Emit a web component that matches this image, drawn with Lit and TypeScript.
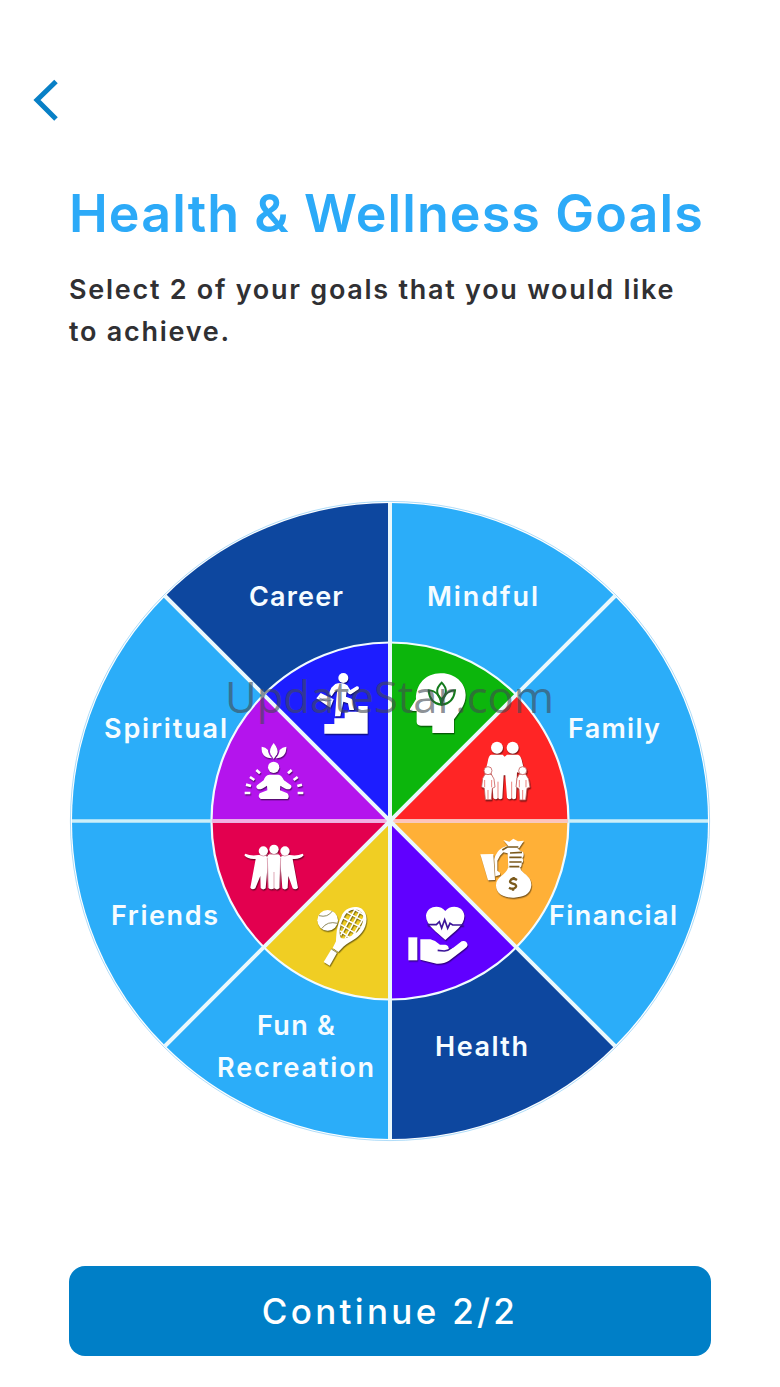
/**
 * Health & Wellness goal picker
 */
import { LitElement, html, svg, css, SVGTemplateResult } from 'lit'
import { customElement, state } from 'lit/decorators.js'
import { classMap } from 'lit/directives/class-map.js'

interface LabelLine {
  text: string
  x: number
  y: number
  width: number
}

interface Goal {
  id: string
  start: number
  color: string
  icon: SVGTemplateResult
  iconX: number
  iconY: number
  lines: LabelLine[]
}

const OUTER = 318
const INNER = 178.5

// Point on a circle, 0deg at twelve o'clock, clockwise
const point = (r: number, deg: number) => {
  const a = (deg * Math.PI) / 180
  return `${(r * Math.sin(a)).toFixed(2)} ${(-r * Math.cos(a)).toFixed(2)}`
}

const wedge = (r: number, start: number) =>
  `M0 0L${point(r, start)}A${r} ${r} 0 0 1 ${point(r, start + 45)}Z`

// Icons are drawn at three units per pixel
const careerIcon = svg`
  <circle cx="160" cy="114" r="15" />
  <path d="M103 252H133V235H164V215H205V198H233V281H103Z" />
  <path d="M136 132Q156 124 172 136L181 150L200 139Q209 138 206 148L184 162Q178 164 174 159L170 154L168 170L184 176Q189 179 189 185L192 210H178L174 190L160 185L151 229H135L139 175L142 150L133 157L125 169L116 162L124 143Z" />
  <path d="M92 159L131 178L121 203L79 175Z" />
  <path class="cut thin blue" d="M87 173L108 184L127 180" />
`

const mindfulIcon = svg`
  <path d="M151 100C193 98 227 128 227 165C227 195 209 214 192 238V279H127V257H93C83 257 79 251 80 240V213H67C59 212 59 207 62 203L78 178C77 132 108 101 151 100Z" />
  <g class="leaf">
    <path d="M155 128C137 145 137 162 155 178C172 162 172 145 155 128Z" />
    <path d="M154 194C151 169 137 152 116 151C118 177 130 191 154 194Z" />
    <path d="M156 194C159 169 173 152 195 151C192 177 180 191 156 194Z" />
    <path d="M155 178V192" />
  </g>
`

const familyIcon = svg`
  <circle cx="141" cy="83" r="18" />
  <circle cx="188" cy="83" r="18" />
  <path d="M124 104H158L164 110L171 104H204Q213 106 217 128L222 147L209 159L201 157L198 235Q190 242 185 233Q179 243 171 233L166 166L161 166L157 235Q149 242 144 233Q138 242 130 234L126 162L108 147L113 126Q116 105 124 104Z" />
  <path class="cut thin red" d="M144 185V236M185 185V236" />
  <g class="child">
    <path d="M105 163H124L132 177L135 201L127 205L124 239H106L103 205L95 201L98 175Z" />
    <path d="M208 163H227L236 177L240 202L231 205L227 240H209L207 206L198 201L201 175Z" />
    <circle cx="114" cy="152" r="12" />
    <circle cx="218" cy="152" r="12" />
  </g>
  <path class="cut thin red" d="M114 210V239M218 210V240M104 180V202M125 180V202M208 180V202M228 180V202" />
`

const financialIcon = svg`
  <path d="M91 97L130 96L135 174L114 175Z" />
  <path d="M133 112Q138 88 157 77L170 72H196L210 86L219 90Q224 101 217 108Q223 119 215 124Q217 135 207 139H175L173 94L160 91L150 101L142 116V146L150 152V159L136 163Z" />
  <path d="M160 54L178 59L190 50L204 58L222 56L207 79L178 76Z" />
  <path d="M174 138H211C213 155 245 159 244 190C242 219 218 226 192 227C160 228 138 215 138 190C138 164 169 158 174 138Z" />
  <path class="cut brown" d="M157 84L172 75H205M180 93L216 91M178 106H215M178 120H215M178 134H208" />
  <path class="cut brown dollar" d="M201 174Q190 167 183 173Q176 181 186 184L195 187Q203 193 193 199Q186 202 177 197M191 165V171M189 200V206" />
`

const healthIcon = svg`
  <path d="M166 93C151 73 113 75 108 106C107 135 139 155 166 180C194 154 225 135 223 106C219 75 180 73 166 93Z" />
  <path class="cut violet" d="M112 134H139L148 125L155 144L164 119L173 145L180 130L188 135H220" />
  <rect x="55" y="172" width="27" height="69" />
  <path d="M91 178H121Q135 181 150 194H166Q176 196 176 205Q177 210 190 203L215 184Q230 180 233 195Q232 202 222 208L177 242Q162 252 140 251L91 239Z" />
  <path class="cut violet" d="M143 211L163 213Q177 211 184 204" />
`

const funIcon = svg`
  <path fill-rule="evenodd" d="M154 110C161 85 192 74 213 85C237 100 232 137 216 157C201 177 183 182 160 200L145 216L128 204L138 184C139 167 138 143 154 110ZM161 114C147 140 146 161 153 174C166 179 187 168 204 154C221 133 227 105 209 92C192 83 170 91 161 114Z" />
  <path class="string" d="M171 97L218 122M160 114L212 142M153 134L198 161M150 153L178 172M192 87L224 106M211 92L166 174M195 88L152 166M222 112L188 168" />
  <path d="M125 206L142 217L119 257L101 246Z" />
  <circle cx="113" cy="121" r="31" />
  <path class="cut thin olive" d="M87 107Q113 114 127 93M96 145Q112 122 143 130M124 207L141 218" />
`

const friendsIcon = svg`
  <path d="M91 95Q108 103 130 99L147 99L160 106L152 199Q144 206 137 198L136 162L121 199Q112 206 106 197L122 111Q99 113 88 100Z" />
  <path d="M263 95Q246 103 224 99H207L195 106L202 199Q210 206 218 198L220 162L233 199Q242 206 249 197L233 111Q255 113 266 100Z" />
  <path d="M163 97H190Q198 101 197 112L193 199Q185 206 178 198Q169 206 160 198L156 112Q155 101 163 97Z" />
  <circle cx="145" cy="87" r="14" />
  <circle cx="177" cy="82" r="14" />
  <circle cx="210" cy="87" r="14" />
  <path class="cut thin crimson" d="M177 150V202M157 107L160 198M197 107L194 198M134 99Q145 106 158 98M197 98Q210 106 221 99M164 95Q177 101 190 95" />
`

const spiritualIcon = svg`
  <path d="M176 69Q160 89 167 103L176 117L186 103Q193 89 176 69Z" />
  <path d="M140 80Q152 81 159 90Q160 104 171 115Q137 113 140 80ZM214 80Q202 81 194 90Q193 104 182 115Q215 113 214 80Z" />
  <circle cx="176" cy="142" r="17" />
  <path d="M163 164H190Q201 166 207 181L228 196Q232 202 225 207Q216 211 196 197L195 211L217 220Q225 229 218 237H137Q127 231 134 220L157 211L156 197Q137 211 128 207Q121 202 126 196L146 181Q150 166 163 164Z" />
  <path class="ray" d="M124 150L135 160M105 171L118 180M93 194L108 198M89 219H106M230 150L219 160M248 171L236 180M261 194L247 198M265 219H248" />
`

const GOALS: Goal[] = [
  { id: 'mindful', start: 0, color: '#0cb60c', icon: mindfulIcon, iconX: 0, iconY: -181,
    lines: [{ text: 'Mindful', x: 37, y: -215, width: 111 }] },
  { id: 'family', start: 45, color: '#ff2525', icon: familyIcon, iconX: 60, iconY: -101,
    lines: [{ text: 'Family', x: 178, y: -83, width: 92 }] },
  { id: 'financial', start: 90, color: '#ffb037', icon: financialIcon, iconX: 60, iconY: 1,
    lines: [{ text: 'Financial', x: 159, y: 104, width: 128 }] },
  { id: 'health', start: 135, color: '#6000ff', icon: healthIcon, iconX: 0, iconY: 59,
    lines: [{ text: 'Health', x: 45, y: 235, width: 93 }] },
  { id: 'fun', start: 180, color: '#f0ce23', icon: funIcon, iconX: -100, iconY: 59,
    lines: [
      { text: 'Fun &', x: -133, y: 214, width: 78 },
      { text: 'Recreation', x: -173, y: 256, width: 157 }
    ] },
  { id: 'friends', start: 225, color: '#e3004f', icon: friendsIcon, iconX: -175, iconY: 1,
    lines: [{ text: 'Friends', x: -279, y: 104, width: 107 }] },
  { id: 'spiritual', start: 270, color: '#b414ed', icon: spiritualIcon, iconX: -175, iconY: -101,
    lines: [{ text: 'Spiritual', x: -286, y: -83, width: 123 }] },
  { id: 'career', start: 315, color: '#1d1dff', icon: careerIcon, iconX: -100, iconY: -181,
    lines: [{ text: 'Career', x: -141, y: -215, width: 94 }] }
]

@customElement('goal-wheel')
export class GoalWheel extends LitElement {
  static properties = {
    selected: { attribute: false }
  }

  static styles = css`
    :host {
      display: block;
    }

    svg {
      display: block;
      width: 100%;
      height: 100%;
      overflow: visible;
    }

    .rim {
      fill: #fff;
      stroke: #8ccdf5;
      stroke-width: 0.7;
    }

    .slice {
      fill: #2badf9;
      cursor: pointer;
    }

    .slice.selected {
      fill: #0d479f;
    }

    .ring {
      fill: none;
      stroke: #f1fbff;
      stroke-width: 2.2;
    }

    .spoke {
      stroke: #eaf8fc;
      stroke-width: 4;
    }

    .spoke.level {
      stroke: #cceff9;
      stroke-width: 3.4;
    }

    .spoke.left {
      stroke: #f3b0e4;
    }

    .spoke.right {
      stroke: #ffc4ba;
    }

    .label {
      font-family: Inter, 'Liberation Sans', sans-serif;
      font-size: 27px;
      font-weight: 600;
      fill: #f6fcff;
      pointer-events: none;
    }

    .icon {
      fill: #fff;
      filter: drop-shadow(2px 4px 2px rgba(0, 0, 0, 0.5));
      pointer-events: none;
    }

    .cut {
      fill: none;
      stroke-width: 5;
    }

    .thin { stroke-width: 2.5; }
    .red { stroke: #e86a66; }
    .blue { stroke: #8a8fd8; }
    .brown { stroke: #7b5a1c; }
    .violet { stroke: #3c1599; }
    .olive { stroke: #77713f; }
    .crimson { stroke: #d796aa; }
    .dollar { stroke-width: 7; }

    .child {
      stroke: #c9605f;
      stroke-width: 2.5;
    }

    .leaf {
      fill: none;
      stroke: #147a1c;
      stroke-width: 6;
    }

    .string {
      fill: none;
      stroke: #fff;
      stroke-width: 4.5;
    }

    .ray {
      stroke: #fff;
      stroke-width: 8;
    }

    .watermark {
      font-family: 'Open Sans', 'Noto Sans', sans-serif;
      font-size: 43px;
      font-weight: 400;
      fill: #424950;
      fill-opacity: 0.62;
      pointer-events: none;
    }
  `

  declare selected: string[]

  private pick(id: string) {
    this.dispatchEvent(new CustomEvent('goal-toggle', { detail: { id } }))
  }

  render() {
    return html`
      <svg viewBox="-320 -320 640 640" role="group" aria-label="Goals">
        <circle class="rim" r="319.6" />
        ${GOALS.map(goal => svg`
          <path
            class=${classMap({ slice: true, selected: this.selected.includes(goal.id) })}
            d=${wedge(OUTER, goal.start)}
            @click=${() => this.pick(goal.id)}
          />
          <path d=${wedge(INNER, goal.start)} fill=${goal.color} />
        `)}
        <circle class="ring" r=${INNER} />
        <path class="spoke level" d="M-318 0H318" />
        <path class="spoke level left" d="M-178 0H0" />
        <path class="spoke level right" d="M0 0H178" />
        <path class="spoke" d="M-225 -225L225 225M225 -225L-225 225M0 -318V318" />
        ${GOALS.map(goal => svg`
          <g class="icon" transform="translate(${goal.iconX} ${goal.iconY}) scale(0.3333)">
            ${goal.icon}
          </g>
          ${goal.lines.map(line => svg`
            <text class="label" x=${line.x} y=${line.y} textLength=${line.width}>${line.text}</text>
          `)}
        `)}
        <text class="watermark" x="-165" y="-108" textLength="329" lengthAdjust="spacingAndGlyphs">UpdateStar.com</text>
      </svg>
    `
  }
}

@customElement('app-root')
export class AppRoot extends LitElement {
  static styles = css`
    :host {
      display: flex;
      flex-direction: column;
      box-sizing: border-box;
      height: 1387px;
      padding: 76px 69px 31px;
      background: #fff;
      font-family: Inter, 'Liberation Sans', sans-serif;
    }

    .back {
      width: 48px;
      height: 48px;
      margin-left: -45px;
      padding: 0;
      border: none;
      background: none;
      cursor: pointer;
    }

    .back svg {
      display: block;
      fill: none;
      stroke: #0880c6;
      stroke-width: 5;
    }

    h1 {
      margin: 58px 0 0;
      font-size: 52px;
      font-weight: 600;
      line-height: 64px;
      letter-spacing: 1.1px;
      white-space: nowrap;
      color: #2caaf8;
    }

    p {
      margin: 23px 0 0;
      font-size: 27px;
      font-weight: 600;
      line-height: 42px;
      letter-spacing: 1.73px;
      white-space: nowrap;
      color: #303033;
    }

    goal-wheel {
      width: 640px;
      height: 640px;
      margin: 148px 0 0 1.4px;
    }

    .continue {
      height: 90px;
      margin-top: auto;
      padding: 0;
      border: none;
      border-radius: 16px;
      background: #007fc7;
      color: #fff;
      font-family: inherit;
      font-size: 35px;
      font-weight: 500;
      letter-spacing: 3.3px;
      cursor: pointer;
    }
  `

  @state() private selected = ['career', 'health']

  private toggle(e: CustomEvent) {
    const id = e.detail.id
    if (this.selected.includes(id)) {
      this.selected = this.selected.filter(s => s !== id)
    } else if (this.selected.length < 2) {
      this.selected = [...this.selected, id]
    }
  }

  render() {
    return html`
      <button class="back" aria-label="Back">
        <svg width="48" height="48" viewBox="0 0 48 48">
          <path d="M32 5.5L13 24L32 43" />
        </svg>
      </button>
      <h1>Health &amp; Wellness Goals</h1>
      <p>Select 2 of your goals that you would like<br />to achieve.</p>
      <goal-wheel .selected=${this.selected} @goal-toggle=${this.toggle}></goal-wheel>
      <button class="continue">Continue ${this.selected.length}/2</button>
    `
  }
}

declare global {
  interface HTMLElementTagNameMap {
    'app-root': AppRoot
    'goal-wheel': GoalWheel
  }
}
